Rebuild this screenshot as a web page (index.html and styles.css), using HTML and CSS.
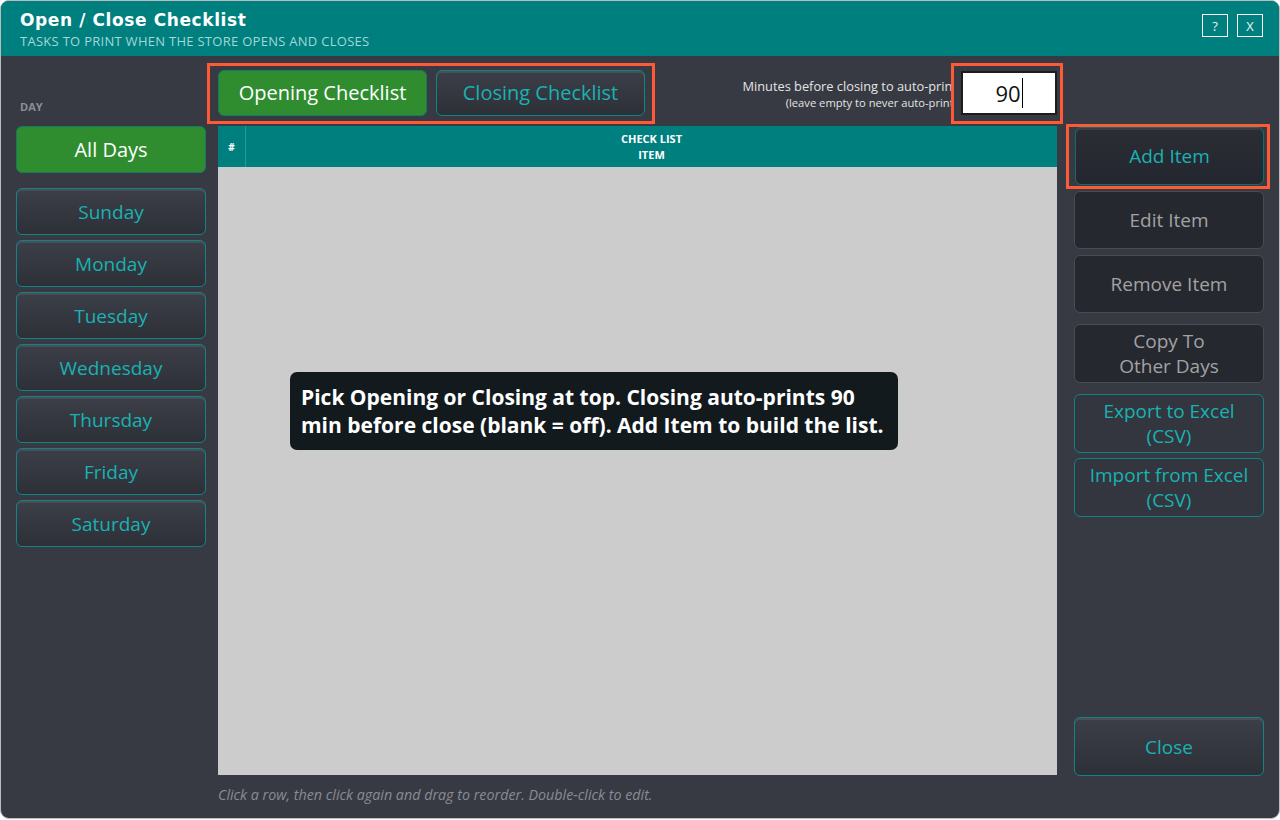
FILE: index.html
```html
<!DOCTYPE html>
<html lang="en">
<head>
<meta charset="utf-8">
<title>Open / Close Checklist</title>
<link rel="stylesheet" href="styles.css">
</head>
<body>
<div class="window">
  <header class="titlebar">
    <div class="titles">
      <h1 class="title">Open / Close Checklist</h1>
      <p class="subtitle">TASKS TO PRINT WHEN THE STORE OPENS AND CLOSES</p>
    </div>
    <div class="win-btns">
      <button class="wbtn">?</button>
      <button class="wbtn">X</button>
    </div>
  </header>
  <main class="content">
    <aside class="days">
      <div class="day-label">DAY</div>
      <button class="btn btn-green btn-all">All Days</button>
      <div class="day-list">
        <button class="btn btn-day">Sunday</button>
        <button class="btn btn-day">Monday</button>
        <button class="btn btn-day">Tuesday</button>
        <button class="btn btn-day">Wednesday</button>
        <button class="btn btn-day">Thursday</button>
        <button class="btn btn-day">Friday</button>
        <button class="btn btn-day">Saturday</button>
      </div>
    </aside>
    <section class="center">
      <div class="topbar">
        <div class="seg">
          <button class="btn btn-green btn-seg">Opening Checklist</button>
          <button class="btn btn-seg">Closing Checklist</button>
        </div>
        <div class="minutes">
          <div class="min-label">
            <span class="l1">Minutes before closing to auto-print</span>
            <span class="l2">(leave empty to never auto-print)</span>
          </div>
          <div class="input-wrap">
            <div class="input">90<span class="caret"></span></div>
          </div>
        </div>
      </div>
      <div class="table">
        <div class="thead">
          <div class="th th-num">#</div>
          <div class="th th-item">CHECK LIST<br>ITEM</div>
        </div>
        <div class="tbody">
          <div class="tip">Pick Opening or Closing at top. Closing auto-prints 90 min before close (blank = off). Add Item to build the list.</div>
        </div>
      </div>
      <p class="hint">Click a row, then click again and drag to reorder. Double-click to edit.</p>
    </section>
    <aside class="actions">
      <div class="add-wrap">
        <button class="btn btn-dark btn-act">Add Item</button>
      </div>
      <button class="btn btn-off btn-act act-edit">Edit Item</button>
      <button class="btn btn-off btn-act act-remove">Remove Item</button>
      <button class="btn btn-off btn-act btn-two act-copy">Copy To<br>Other Days</button>
      <button class="btn btn-act btn-two act-export">Export to Excel<br>(CSV)</button>
      <button class="btn btn-act btn-two act-import">Import from Excel<br>(CSV)</button>
      <button class="btn btn-act btn-close">Close</button>
    </aside>
  </main>
</div>
</body>
</html>
```
FILE: styles.css
```css
* { box-sizing: border-box; }
html, body { margin: 0; padding: 0; background: #ffffff; }
body { font-family: "Open Sans", "Noto Sans", sans-serif; }

.window {
  width: 1280px;
  height: 819px;
  border: 1px solid #b8bebf;
  border-radius: 9px;
  overflow: hidden;
  background: #373a42;
  display: flex;
  flex-direction: column;
}

.titlebar {
  height: 55px;
  flex: none;
  background: #007f7f;
  display: flex;
  justify-content: space-between;
  align-items: flex-start;
  padding: 0 16px 0 19px;
}
.title {
  margin: 0;
  padding-top: 9px;
  font-family: "DejaVu Sans", "Open Sans", sans-serif;
  font-size: 17px;
  line-height: 21px;
  letter-spacing: 0.6px;
  font-weight: 700;
  color: #ffffff;
}
.subtitle {
  margin: 2px 0 0;
  font-size: 13px;
  line-height: 16px;
  letter-spacing: 0.28px;
  color: #a3d8d8;
}
.win-btns {
  display: flex;
  gap: 9px;
  padding-top: 13px;
}
.wbtn {
  width: 26px;
  height: 23px;
  border: 1px solid #ffffff;
  background: transparent;
  color: #e8f4f4;
  font-family: "Open Sans", sans-serif;
  font-size: 13px;
  padding: 0;
  line-height: 20px;
}

.content {
  flex: 1;
  display: flex;
  min-height: 0;
}

/* buttons */
.btn {
  display: flex;
  align-items: center;
  justify-content: center;
  width: 100%;
  padding: 0;
  border: 1px solid #0f8585;
  border-radius: 6px;
  background: linear-gradient(#3c3f48, #2e3038);
  box-shadow: inset 0 2px 0 rgba(255,255,255,0.08);
  color: #18b2b2;
  font-family: "Open Sans", "Noto Sans", sans-serif;
  font-size: 19px;
  line-height: 24px;
  text-align: center;
}
.btn-green {
  background: #2f8d30;
  color: #ffffff;
  border-color: #167a62;
  box-shadow: none;
}
.btn-dark {
  background: linear-gradient(#2b2d35, #252730);
  border-color: #0c6f6f;
}
.btn-off {
  background: #262830;
  border-color: #4a4c54;
  color: #a2a2a2;
  box-shadow: none;
}

/* left column */
.days {
  width: 190px;
  margin-left: 15px;
  flex: none;
  display: flex;
  flex-direction: column;
}
.day-label {
  margin-top: 44px;
  padding-left: 4px;
  font-size: 11px;
  line-height: 13px;
  font-weight: 700;
  color: #8b8e97;
}
.btn-all {
  margin-top: 13px;
  height: 47px;
  font-size: 20px;
}
.day-list {
  margin-top: 15px;
  display: flex;
  flex-direction: column;
  gap: 5px;
}
.btn-day { height: 47px; }

/* center */
.center {
  width: 839px;
  margin-left: 12px;
  flex: none;
  display: flex;
  flex-direction: column;
}
.topbar {
  height: 70px;
  flex: none;
  display: flex;
  justify-content: space-between;
  align-items: flex-start;
}
.seg {
  margin-top: 7px;
  margin-left: -11px;
  display: flex;
  gap: 9px;
  border: 3px solid #ff5a36;
  padding: 4px 7px 5px 8px;
}
.btn-seg {
  width: 209px;
  height: 46px;
  font-size: 20px;
}
.minutes {
  margin-top: 7px;
  margin-right: -6px;
  display: flex;
  align-items: center;
}
.min-label {
  display: flex;
  flex-direction: column;
  align-items: flex-end;
  margin-right: -6px;
  color: #e4e4e4;
}
.l1 { font-size: 12.8px; line-height: 17px; }
.l2 { font-size: 11.2px; line-height: 15px; }
.input-wrap {
  position: relative;
  z-index: 1;
  background: #373a42;
  border: 3px solid #ff5a36;
  padding: 5px 3px 6px 7px;
}
.input {
  width: 96px;
  height: 44px;
  background: #ffffff;
  border: 2px solid #1c1c1c;
  display: flex;
  align-items: center;
  justify-content: center;
  font-size: 22px;
  color: #111111;
}
.caret {
  display: inline-block;
  width: 1px;
  height: 30px;
  background: #000000;
  margin-left: 1px;
}

.table {
  height: 649px;
  flex: none;
  background: #cccccc;
  display: flex;
  flex-direction: column;
}
.thead {
  height: 41px;
  flex: none;
  background: #007f7f;
  display: flex;
}
.th {
  color: #ffffff;
  font-weight: 700;
  display: flex;
  align-items: center;
  justify-content: center;
  text-align: center;
}
.th-num {
  width: 28px;
  font-size: 10px;
  border-right: 1px solid #2a9898;
}
.th-item {
  flex: 1;
  font-size: 11px;
  line-height: 16px;
}
.tbody {
  flex: 1;
  position: relative;
}
.tip {
  position: absolute;
  left: 72px;
  top: 205px;
  width: 608px;
  height: 78px;
  background: #121a1e;
  border-radius: 7px;
  padding: 11px 11px;
  color: #ffffff;
  font-weight: 700;
  font-size: 21px;
  line-height: 28px;
}
.hint {
  margin: 0;
  padding-top: 10px;
  font-size: 14.3px;
  line-height: 19px;
  font-style: italic;
  color: #888c95;
}

/* right column */
.actions {
  width: 190px;
  margin-left: 17px;
  flex: none;
  display: flex;
  flex-direction: column;
}
.add-wrap {
  margin-top: 68px;
  margin-left: -8px;
  margin-right: -6px;
  border: 3px solid #ff5a36;
  padding: 0 3px 1px 6px;
}
.btn-act { height: 58px; }
.act-edit { margin-top: 2px; }
.act-remove { margin-top: 6px; }
.act-copy { margin-top: 11px; height: 59px; }
.act-export { margin-top: 11px; height: 59px; background: #33363e; box-shadow: none; }
.act-import { margin-top: 5px; height: 59px; background: #33363e; box-shadow: none; }
.btn-two { line-height: 25px; }
.btn-close {
  margin-top: auto;
  margin-bottom: 42px;
  height: 59px;
}
```
